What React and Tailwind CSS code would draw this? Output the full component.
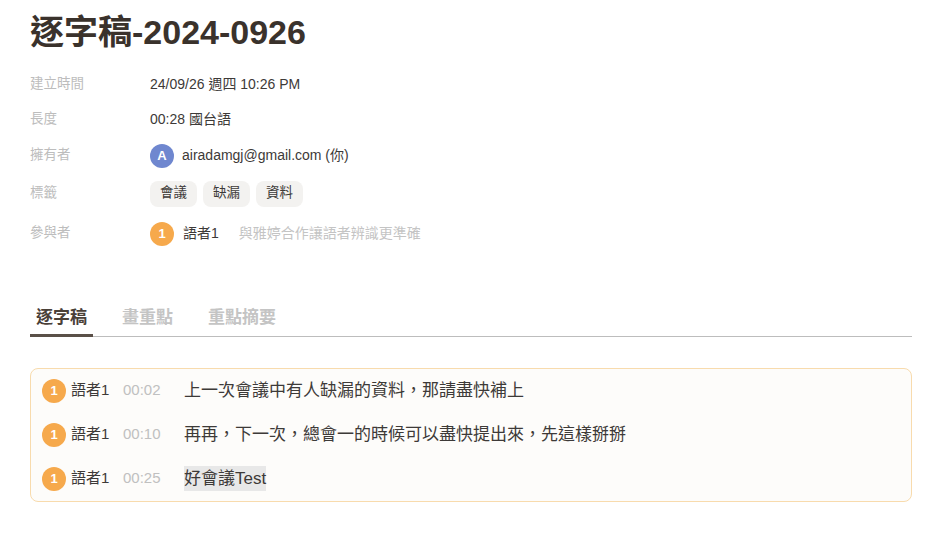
import React from "react";

const font = { fontFamily: '"Liberation Sans", "Noto Sans CJK TC", sans-serif' };

const rows = [
  { id: 1, time: "00:02", text: "上一次會議中有人缺漏的資料，那請盡快補上" },
  { id: 2, time: "00:10", text: "再再，下一次，總會一的時候可以盡快提出來，先這樣掰掰" },
  { id: 3, time: "00:25", text: "好會議Test", mark: true },
];

function Badge({ children, className }) {
  return (
    <span
      className={
        "flex w-6 h-6 shrink-0 items-center justify-center rounded-full text-[13px] font-bold text-white " +
        className
      }
    >
      {children}
    </span>
  );
}

export default function App() {
  return (
    <div className="min-h-screen bg-white pl-[30px] pr-[23px] pt-[12px] text-[#3d3530]" style={font}>
      {/* Title */}
      <h1 className="text-[34px] font-bold leading-[40px] text-[#3a322c]">逐字稿-2024-0926</h1>

      {/* Meta */}
      <div className="mt-[15px] flex flex-col text-[13.5px]">
        <div className="flex h-[35px] items-center">
          <span className="w-[120px] text-[#bdbdbd]">建立時間</span>
          <span className="text-[14px] text-[#3d3a38]">24/09/26 週四 10:26 PM</span>
        </div>
        <div className="flex h-[35px] items-center">
          <span className="w-[120px] text-[#bdbdbd]">長度</span>
          <span className="text-[14px] text-[#3d3a38]">00:28 國台語</span>
        </div>
        <div className="flex h-[37px] items-center">
          <span className="w-[120px] text-[#bdbdbd]">擁有者</span>
          <Badge className="bg-[#6f87cf]">A</Badge>
          <span className="ml-[8px] text-[14px] text-[#3d3a38]">airadamgj@gmail.com (你)</span>
        </div>
        <div className="flex h-[39px] items-center">
          <span className="w-[120px] text-[#bdbdbd]">標籤</span>
          <div className="flex gap-[6px]">
            {["會議", "缺漏", "資料"].map((t) => (
              <span key={t} className="flex h-[26px] items-center rounded-lg bg-[#f3f2f0] px-[10px] text-[#3d3a38]">
                {t}
              </span>
            ))}
          </div>
        </div>
        <div className="flex h-[41px] items-center">
          <span className="w-[120px] text-[#bdbdbd]">參與者</span>
          <Badge className="bg-[#f6a94c]">1</Badge>
          <span className="ml-[9px] text-[14px] text-[#3d3a38]">語者1</span>
          <span className="ml-[20px] text-[14px] text-[#c4c4c4]">與雅婷合作讓語者辨識更準確</span>
        </div>
      </div>

      {/* Tabs */}
      <div className="mt-[51px] flex gap-[23px] border-b border-[#bdbdbd] text-[17px] font-bold">
        <div className="-mb-px border-b-[3px] border-[#5a5048] px-[6px] pb-[3px] text-[#4a4038]">逐字稿</div>
        <div className="px-[6px] pb-[3px] text-[#c4c4c4]">畫重點</div>
        <div className="px-[6px] pb-[3px] text-[#c4c4c4]">重點摘要</div>
      </div>

      {/* Transcript */}
      <div className="mt-[31px] rounded-lg border border-[#f8dbad] bg-[#fdfcfa] px-[11px]">
        {rows.map((r) => (
          <div key={r.id} className="flex h-[44px] items-center">
            <Badge className="bg-[#f6a94c]">1</Badge>
            <span className="ml-[5px] w-[52px] text-[15px] text-[#3d3a38]">語者1</span>
            <span className="w-[61px] text-[15px] text-[#c0c0c0]">{r.time}</span>
            <span className={"text-[17px] text-[#3d3a38] " + (r.mark ? "bg-[#e8e8e8]" : "")}>{r.text}</span>
          </div>
        ))}
      </div>
    </div>
  );
}
